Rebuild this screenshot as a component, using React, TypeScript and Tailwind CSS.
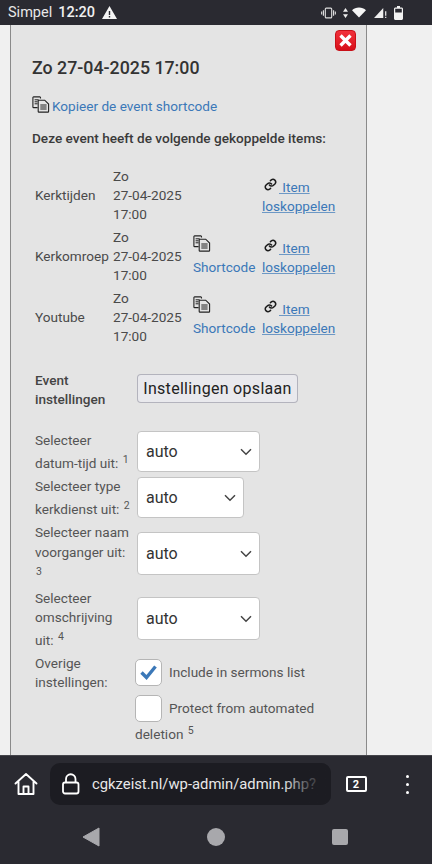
import React from "react";

const CopyIcon = () => (
  <svg width="18" height="17" viewBox="0 0 18 17" fill="none" stroke="#222" strokeWidth="1.1" className="inline-block align-baseline shrink-0">
    <path d="M8.5 2.5V1.6c0-.4-.3-.7-.7-.7H1.6c-.4 0-.7.3-.7.7v9.3c0 .4.3.7.7.7h4" />
    <path d="M2.6 3.8h4M2.6 5.8h3M2.6 7.8h3" strokeWidth="1" />
    <path d="M6.5 4.2h6.2l3.9 3.9v7.3c0 .4-.3.7-.7.7H6.9c-.4 0-.7-.3-.7-.7V4.600c0-.2.1-.4.3-.4z" fill="#e4e4e4" />
    <path d="M8.3 9h6.3M8.3 11h6.3M8.3 13h6.3" strokeWidth="1" />
  </svg>
);

const LinkIcon = () => (
  <svg width="13" height="13" viewBox="0 0 24 24" fill="none" stroke="#1c1c1c" strokeWidth="2.8" strokeLinecap="round" className="inline-block">
    <path d="M10 13a5 5 0 0 0 7.500.5l3-3a5 5 0 0 0-7-7l-1.700 1.700" />
    <path d="M14 11a5 5 0 0 0-7.500-.5l-3 3a5 5 0 0 0 7 7l1.700-1.700" />
  </svg>
);

const Sel = ({ w, h }: { w: string; h: string }) => (
  <div className={`shrink-0 flex items-center justify-between bg-white border border-[#c4c4c4] rounded-[4px] pl-[8px] pr-[7px] text-[16px] text-[#333] ${w} ${h}`}>
    <span>auto</span>
    <svg width="12" height="8" viewBox="0 0 12 8" fill="none" stroke="#444" strokeWidth="1.500"><path d="M1 1.200l5 5 5-5" /></svg>
  </div>
);

const Row = ({ name, sc }: { name: string; sc: boolean }) => (
  <div className="grid grid-cols-[78px_80px_69px_80px] h-[61px] items-center">
    <div>{name}</div>
    <div>Zo<br />27-04-2025<br />17:00</div>
    <div className="text-[#3b78b8] relative -top-[2px]">
      {sc && (<><div className="h-[19px] -mt-[2px] mb-[2px]"><CopyIcon /></div><div className="mt-[4px] -mb-[4px]">Shortcode</div></>)}
    </div>
    <div className="text-[#3b78b8] underline decoration-[#3b78b8]/70 relative top-[1px]">
      <span className="no-underline inline-block relative -top-[3px] ml-[2px] mr-[2px]"><LinkIcon /></span><span>&nbsp;Item</span><br />loskoppelen
    </div>
  </div>
);

const sup = "text-[10.500px] leading-none relative -top-[5px] ml-[1px]";

export default function App() {
  return (
    <div className="w-[432px] h-[864px] flex flex-col overflow-hidden bg-[#f0f0f0] text-[13.600px] leading-[19px] text-[#444]" style={{ fontFamily: "Roboto, sans-serif" }}>
      <div className="h-[25px] shrink-0 bg-[#2a2a31] flex items-center pl-[8px] pr-[29px] text-white text-[14.500px]">
        <span className="text-[#e8e8e8]">Simpel</span>
        <span className="ml-[6px] font-medium text-[#f0f0f0]">12:20</span>
        <svg width="15" height="13" viewBox="0 0 15 13" className="ml-[7px]" fill="#f4f4f4"><path fillRule="evenodd" d="M7.500 0L15 13H0zM6.800 5v4h1.400V5zM6.800 10v1.400h1.400V10z" /></svg>
        <div className="flex-1" />
        <svg width="15" height="12" viewBox="0 0 16 12" fill="none" stroke="#ddd" strokeWidth="1.200" className="mr-[7px]">
          <rect x="4.600" y=".8" width="6.800" height="10.400" rx="1" /><path d="M2.600 3v6M.7 4.500v3M13.400 3v6M15.300 4.500v3" />
        </svg>
        <svg width="5" height="12" viewBox="0 0 6 12" fill="#eee" className="mr-[4px]"><path d="M3 0l3 4.500H0zM3 12l3-4.500H0z" /></svg>
        <svg width="14" height="11" viewBox="0 0 17 12" fill="#f5f5f5" className="mr-[8px]"><path d="M0 3.200C2.200 1.200 5.200 0 8.500 0S14.800 1.200 17 3.200L8.500 12z" /></svg>
        <svg width="13" height="12" viewBox="0 0 14 13" fill="#eee" className="mr-[7px]"><path d="M10 1v11H0z" /><path d="M12 4.500h1.300v5H12zM12 10.500h1.300V12H12z" /></svg>
        <svg width="9" height="14" viewBox="0 0 9 14" fill="#f2f2f2"><path fillRule="evenodd" d="M3 0h3v1.500h1.500c.8 0 1.500.6 1.500 1.400V12.500c0 .8-.7 1.500-1.500 1.500h-6C.7 14 0 13.300 0 12.500V2.900C0 2.100.7 1.500 1.500 1.500H3zM1.200 2.800v3.700h6.600V2.800z" /></svg>
      </div>

      <div className="flex-1 min-h-0 relative ml-[10px] w-[357px] bg-[#e4e4e4] border-x border-[#8a8a8a] pl-[21px]">
        <div className="absolute top-[5px] right-[10px] w-[21px] h-[21px] rounded-[4px] bg-gradient-to-b from-[#f2303a] to-[#d80c18] border border-[#c81018] flex items-center justify-center">
          <svg width="13" height="13" viewBox="0 0 13 13" stroke="#fff" strokeWidth="3.400"><path d="M1.500 1.500l10 10M11.500 1.500l-10 10" /></svg>
        </div>

        <div className="pt-[31px] text-[17.800px] leading-[24px] font-medium text-[#333]">Zo 27-04-2025 17:00</div>

        <div className="mt-[17px] h-[19px] flex items-center text-[#3b78b8]">
          <span className="relative -top-[2px] mr-[2px] flex"><CopyIcon /></span>Kopieer de event shortcode
        </div>

        <div className="mt-[13px] font-medium text-[#3a3a3a]">Deze event heeft de volgende gekoppelde items:</div>

        <div className="mt-[17px] ml-[3px] text-[#4a4a4a]">
          <Row name="Kerktijden" sc={false} />
          <Row name="Kerkomroep" sc={true} />
          <Row name="Youtube" sc={true} />
        </div>

        <div className="mt-[26px] ml-[3px] flex items-start">
          <div className="w-[102px] font-medium -mt-[3px]">Event<br />instellingen</div>
          <button className="w-[161px] h-[29px] bg-[#e9e9ed] border border-[#8f8f9d]/60 rounded-[4px] text-[16px] text-[#222] tracking-[0.3px] flex items-center justify-center">Instellingen opslaan</button>
        </div>

        <div className="mt-[22px] ml-[3px] text-[#555]">
          <div className="flex items-start h-[46px]">
            <div className="w-[102px] -mt-[2px] leading-[23px]">Selecteer<br />datum-tijd uit: <sup className={sup}>1</sup></div>
            <Sel w="w-[123px]" h="h-[41px]" />
          </div>
          <div className="flex items-start h-[55px]">
            <div className="w-[102px] -mt-[2px] leading-[23px]">Selecteer type<br />kerkdienst uit: <sup className={sup}>2</sup></div>
            <Sel w="w-[107px]" h="h-[41px]" />
          </div>
          <div className="flex items-start h-[65px]">
            <div className="w-[102px] -mt-[9px] leading-[19px]">Selecteer naam<br /><span className="relative top-[1px]">voorganger uit:</span><br /><span className="relative top-[5px]"><sup className={sup}>3</sup></span></div>
            <Sel w="w-[123px]" h="h-[43px]" />
          </div>
          <div className="flex items-start h-[54px]">
            <div className="w-[102px] -mt-[8px] leading-[19px]">Selecteer<br />omschrijving<br /><span className="relative top-[4px]">uit: <sup className={sup}>4</sup></span></div>
            <Sel w="w-[123px]" h="h-[43px]" />
          </div>
          <div className="flex items-start mt-[2px]">
            <div className="w-[100px] pt-[1px]">Overige<br />instellingen:</div>
            <div className="flex-1 pt-[6px]">
              <div className="flex items-center h-[27px]">
                <div className="w-[27px] h-[27px] bg-white border border-[#b5b5b5] rounded-[5px] flex items-center justify-center">
                  <svg width="17" height="15" viewBox="0 0 17 15" fill="none" stroke="#3b78b8" strokeWidth="3.400"><path d="M1.500 7.500l5 5L15.500 1.500" /></svg>
                </div>
                <span className="ml-[7px]">Include in sermons list</span>
              </div>
              <div className="flex items-center h-[27px] mt-[9px]">
                <div className="w-[27px] h-[27px] bg-white border border-[#b5b5b5] rounded-[5px]" />
                <span className="ml-[7px]">Protect from automated</span>
              </div>
              <div className="mt-[3px]">deletion <sup className={sup}>5</sup></div>
            </div>
          </div>
        </div>
      </div>

      <div className="h-[109px] shrink-0 bg-[#2a2a31] border-t border-[#44444a]">
        <div className="h-[66px] flex items-start pt-[7px]">
          <div className="w-[50px] h-[42px] flex items-center justify-center">
            <svg width="24" height="24" viewBox="0 0 24 24" fill="none" stroke="#fff" strokeWidth="1.900" strokeLinejoin="round" strokeLinecap="round" className="ml-[1px]">
              <path d="M1.500 11.500L12 2l10.500 9.500M4.500 9.500V22h15V9.500M9.500 22v-7.500h5V22" />
            </svg>
          </div>
          <div className="w-[281px] h-[42px] bg-[#1c1c22] rounded-[10px] flex items-center pl-[12px] overflow-hidden relative">
            <svg width="18" height="22" viewBox="0 0 18 22" fill="none" stroke="#fff" strokeWidth="1.800" className="shrink-0"><rect x="1" y="9.500" width="15.500" height="11" rx="2" /><path d="M4 9.500V6a4.700 4.700 0 0 1 9.500 0v3.500" /></svg>
            <span className="ml-[12px] text-[14.800px] text-[#e8e8e8] whitespace-nowrap">cgkzeist.nl/wp-admin/admin.php?</span>
            <div className="absolute right-0 top-0 bottom-0 w-[48px] bg-gradient-to-r from-[#1c1c22]/0 via-[#1c1c22]/70 to-[#1c1c22]" />
          </div>
          <div className="w-[50px] h-[42px] flex items-center justify-center">
            <div className="w-[21px] h-[16px] border-2 border-white rounded-[2px] flex items-center justify-center text-white text-[11px] font-bold leading-none">2</div>
          </div>
          <div className="ml-[13px] w-[26px] h-[42px] flex flex-col items-center justify-center gap-[5px]">
            <div className="w-[3px] h-[3px] rounded-full bg-white" /><div className="w-[3px] h-[3px] rounded-full bg-white" /><div className="w-[3px] h-[3px] rounded-full bg-white" />
          </div>
        </div>
        <div className="h-[30px] flex items-center">
          <svg width="18" height="20" viewBox="0 0 18 20" fill="#a8a8ac" className="ml-[82px]"><path d="M17 1v18L1 10z" stroke="#a8a8ac" strokeLinejoin="round" /></svg>
          <div className="w-[18px] h-[18px] rounded-full bg-[#a8a8ac] ml-[107px]" />
          <div className="w-[16px] h-[16px] rounded-[2px] bg-[#a8a8ac] ml-[107px]" />
        </div>
      </div>
    </div>
  );
}
